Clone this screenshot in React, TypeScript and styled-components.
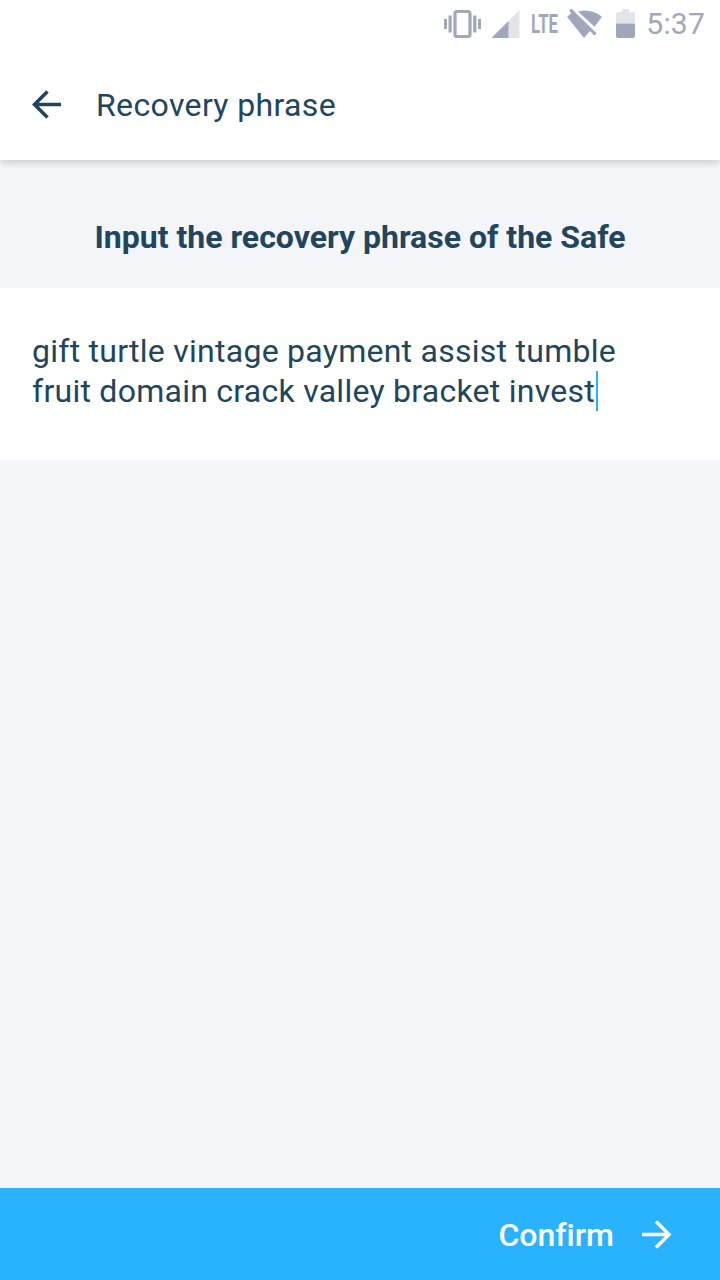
import React from 'react';
import styled, { createGlobalStyle } from 'styled-components';

const Global = createGlobalStyle`
  *{box-sizing:border-box}
  body{margin:0;background:#f3f5f9;font-family:Roboto,sans-serif;color:#20455c}
`;
const Screen = styled.div`
  width:720px;height:1280px;display:flex;flex-direction:column;background:#f3f5f9;
`;
const Header = styled.header`
  height:160px;flex:none;background:#fff;box-shadow:0 2px 8px rgba(0,0,0,.2);
`;
const StatusBar = styled.div`
  height:48px;display:flex;justify-content:flex-end;padding-right:15px;color:#a1a7bb;
`;
const StatusIcons = styled.svg`
  width:200px;height:48px;flex:none;
`;
const Clock = styled.span`
  font-size:30px;line-height:48px;letter-spacing:.2px;width:65px;text-align:right;white-space:nowrap;
`;
const Toolbar = styled.div`
  height:112px;display:flex;align-items:center;padding:0 0 0 28px;
`;
const ArrowIcon = styled.svg`
  width:36px;height:36px;flex:none;
`;
const Title = styled.h1`
  margin:2px 0 0 32px;font-size:32px;font-weight:400;line-height:38px;letter-spacing:.36px;white-space:nowrap;
`;
const Prompt = styled.h2`
  margin:0;height:128px;padding-top:58px;font-size:32px;line-height:38px;font-weight:700;text-align:center;white-space:nowrap;
`;
const PhraseField = styled.div`
  height:172px;background:#fff;padding:43px 32px;font-size:32px;line-height:40px;
`;
const Line = styled.div`
  display:flex;white-space:nowrap;letter-spacing:.26px;
`;
const Caret = styled.span`
  width:2px;height:40px;margin-left:1px;background:#29b2fd;
`;
const Confirm = styled.button`
  margin-top:auto;height:92px;border:0;background:#29b2fd;color:#fff;font:500 32px Roboto,sans-serif;
  display:flex;align-items:center;justify-content:flex-end;gap:24px;padding:0 46px 0 0;
`;
const ConfirmLabel = styled.span`
  padding-top:2px;letter-spacing:.01px;font-variant-ligatures:none;
`;

export default function App() {
  return (
    <Screen>
      <Global />
      <Header>
        <StatusBar>
          <StatusIcons viewBox="440 0 200 48" fill="#a1a7bb">
            <path d="M444 19h3v10h-3zM448.500 15.500h3.200v17h-3.200zM473.200 15.500h3.200v17h-3.200zM478 19h3v10h-3z" />
            <rect x="455" y="11.500" width="15" height="25" rx="2" fill="none" stroke="#a1a7bb" strokeWidth="3.200" />
            <path d="M519.500 10v28h-28z" opacity=".3" />
            <path d="M508.500 21v17h-17z" />
            <text x="531" y="33" fontSize="25" fontWeight="700" textLength="27" lengthAdjust="spacingAndGlyphs">LTE</text>
            <path d="M578 11.500c8-2.500 16.500-.5 24 5.300l-7.500 9.900z" />
            <path d="M571.300 8.500L596.500 33.200 594.300 35.400 589.900 31 584 38 567 16.700 571.300 13.200 569.200 10.800z" />
            <path d="M622 9h7v3h4a2 2 0 0 1 2 2v9.500h-19V14a2 2 0 0 1 2-2h4z" opacity=".3" />
            <path d="M616 23.500h19V36a2 2 0 0 1-2 2h-15a2 2 0 0 1-2-2z" />
          </StatusIcons>
          <Clock>5:37</Clock>
        </StatusBar>
        <Toolbar>
          <ArrowIcon viewBox="0 0 36 36" fill="none" stroke="#20455c" strokeWidth="3.500"><path d="M33 18.500H7M19.500 5.500L6.500 18.500l13 13" /></ArrowIcon>
          <Title>Recovery phrase</Title>
        </Toolbar>
      </Header>
      <Prompt>Input the recovery phrase of the Safe</Prompt>
      <PhraseField>
        <Line>gift turtle vintage payment assist tumble</Line>
        <Line>fruit domain crack valley bracket invest<Caret /></Line>
      </PhraseField>
      <Confirm>
        <ConfirmLabel>Confirm</ConfirmLabel>
        <ArrowIcon viewBox="0 0 36 36" fill="none" stroke="#fff" strokeWidth="3.500"><path d="M4 18.500h27M18 5.500l13 13-13 13" /></ArrowIcon>
      </Confirm>
    </Screen>
  );
}
